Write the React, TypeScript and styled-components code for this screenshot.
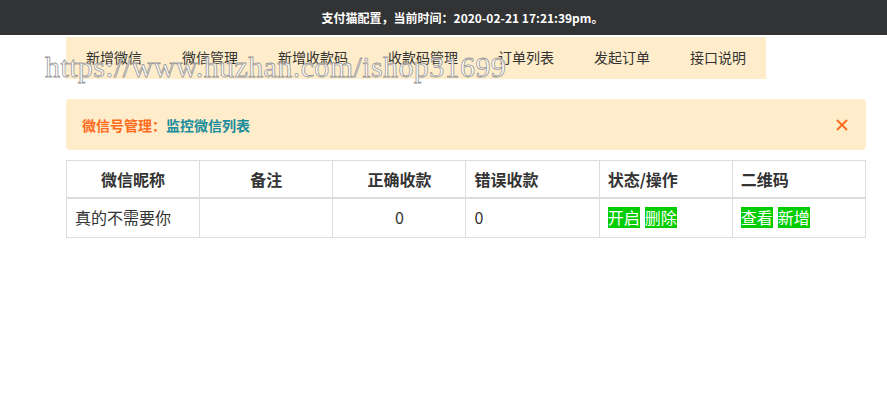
import React from "react";
import styled, {createGlobalStyle} from "styled-components";

const GlobalStyle = createGlobalStyle`
    html, body {
        margin: 0;
        padding: 0;
        background: #fff;
    }
    body {
        font-family: "Noto Sans CJK SC", "Noto Sans", sans-serif;
        color: #333;
    }
`;

const Page = styled.div`
    position: relative;
    width: 887px;
    min-height: 419px;
`;

const TopBar = styled.div`
    height: 35px;
    background: #323334;
    color: #fff;
    font-size: 12px;
    font-weight: bold;
    display: flex;
    align-items: center;
    justify-content: center;
    padding-left: 38px;
    box-sizing: border-box;
`;

const Container = styled.div`
    width: 800px;
    margin-left: 66px;
    padding-top: 2px;
`;

const Nav = styled.nav`
    width: 700px;
    height: 42px;
    background: #feecca;
    display: flex;
    align-items: center;
`;

const NavItem = styled.span`
    padding: 0 20px 2px;
    font-size: 14px;
    color: #333;
    white-space: nowrap;
    cursor: pointer;
`;

const Watermark = styled.div`
    position: absolute;
    left: 45px;
    top: 50px;
    font-family: "Liberation Serif", serif;
    font-size: 30px;
    letter-spacing: 0.4px;
    color: rgba(255, 255, 255, 0.85);
    -webkit-text-stroke: 0.8px #9a9a9a;
    pointer-events: none;
    white-space: nowrap;
`;

const Alert = styled.div`
    margin-top: 20px;
    height: 51px;
    background: #feecca;
    border-radius: 4px;
    display: flex;
    align-items: center;
    justify-content: space-between;
    padding: 0 18px 0 16px;
    box-sizing: border-box;
    font-size: 14px;
    font-weight: bold;
`;

const Crumb = styled.span<{ $tone: "orange" | "teal" }>`
    color: ${p => (p.$tone === "orange" ? "#ff6a1c" : "#1a8c9c")};
`;

const Close = styled.button`
    border: 0;
    background: none;
    padding: 0;
    display: flex;
    cursor: pointer;
`;

const Table = styled.table`
    margin-top: 10px;
    width: 800px;
    border-collapse: collapse;
    table-layout: fixed;
    font-size: 16px;
`;

const Th = styled.th<{ $align?: string }>`
    border: 1px solid #ddd;
    border-bottom-width: 2px;
    padding: 7px 8px;
    line-height: 22px;
    font-weight: bold;
    color: #333;
    text-align: ${p => p.$align || "left"};
`;

const Td = styled.td<{ $align?: string }>`
    border: 1px solid #ddd;
    padding: 8px 8px 9px;
    line-height: 21px;
    color: #333;
    text-align: ${p => p.$align || "left"};
`;

const GreenBtn = styled.span`
    display: inline-block;
    background: #00cc00;
    color: #fff;
    font-size: 16px;
    line-height: 21px;
    margin-right: 5px;
    cursor: pointer;
`;

const headers = [
    {label: "微信昵称", align: "center"},
    {label: "备注", align: "center"},
    {label: "正确收款", align: "center"},
    {label: "错误收款"},
    {label: "状态/操作"},
    {label: "二维码"},
];

const navItems = ["新增微信", "微信管理", "新增收款码", "收款码管理", "订单列表", "发起订单", "接口说明"];

export default function App() {
    return (
        <Page>
            <GlobalStyle/>
            <TopBar>支付猫配置，当前时间：2020-02-21 17:21:39pm。</TopBar>
            <Container>
                <Nav>
                    {navItems.map(item => (
                        <NavItem key={item}>{item}</NavItem>
                    ))}
                </Nav>
                <Alert>
                    <span>
                        <Crumb $tone="orange">微信号管理：</Crumb>
                        <Crumb $tone="teal">监控微信列表</Crumb>
                    </span>
                    <Close aria-label="close">
                        <svg width="12" height="12" viewBox="0 0 12 12">
                            <path d="M1 1 L11 11 M11 1 L1 11" stroke="#ff6a1c" strokeWidth="1.8" fill="none"/>
                        </svg>
                    </Close>
                </Alert>
                <Table>
                    <thead>
                        <tr>
                            {headers.map(h => (
                                <Th key={h.label} $align={h.align}>{h.label}</Th>
                            ))}
                        </tr>
                    </thead>
                    <tbody>
                        <tr>
                            <Td>真的不需要你</Td>
                            <Td></Td>
                            <Td $align="center">0</Td>
                            <Td>0</Td>
                            <Td>
                                <GreenBtn>开启</GreenBtn>
                                <GreenBtn>删除</GreenBtn>
                            </Td>
                            <Td>
                                <GreenBtn>查看</GreenBtn>
                                <GreenBtn>新增</GreenBtn>
                            </Td>
                        </tr>
                    </tbody>
                </Table>
            </Container>
            <Watermark>https://www.huzhan.com/ishop31699</Watermark>
        </Page>
    );
}
